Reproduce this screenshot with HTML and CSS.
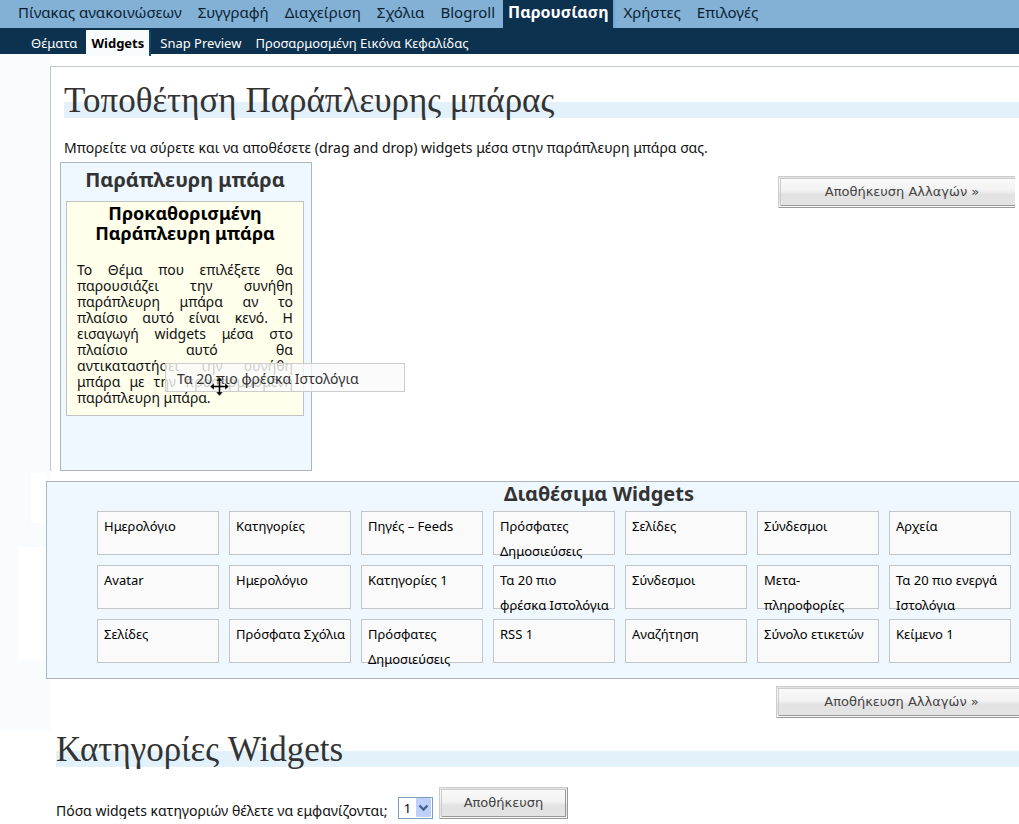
FILE: index.html
```html
<!DOCTYPE html>
<html lang="el">
<head>
<meta charset="utf-8">
<title>Widgets</title>
<link rel="stylesheet" href="styles.css">
</head>
<body>
<nav class="main-nav">
  <a href="#">Πίνακας ανακοινώσεων</a>
  <a href="#">Συγγραφή</a>
  <a href="#">Διαχείριση</a>
  <a href="#">Σχόλια</a>
  <a href="#">Blogroll</a>
  <a href="#" class="current">Παρουσίαση</a>
  <a href="#">Χρήστες</a>
  <a href="#">Επιλογές</a>
</nav>
<nav class="sub-nav">
  <a href="#">Θέματα</a>
  <a href="#" class="current">Widgets</a>
  <a href="#">Snap Preview</a>
  <a href="#">Προσαρμοσμένη Εικόνα Κεφαλίδας</a>
</nav>
<div class="workspace">
  <main class="panel">
    <h1 class="title">Τοποθέτηση Παράπλευρης μπάρας</h1>
    <p class="intro">Μπορείτε να σύρετε και να αποθέσετε (drag and drop) widgets μέσα στην παράπλευρη μπάρα σας.</p>
    <div class="arrange">
      <section class="sidebar">
        <h2 class="box-title">Παράπλευρη μπάρα</h2>
        <div class="placeholder">
          <h3 class="placeholder-title">Προκαθορισμένη Παράπλευρη μπάρα</h3>
          <p class="placeholder-text"><span class="full-lines">Το Θέμα που επιλέξετε θα παρουσιάζει την συνήθη παράπλευρη μπάρα αν το πλαίσιο αυτό είναι κενό. Η εισαγωγή widgets μέσα στο πλαίσιο αυτό θα</span> αντικαταστήσει την συνήθη μπάρα με την προσαρμοσμένη παράπλευρη μπάρα.</p>
        </div>
        <div class="dragged">Τα 20 πιο φρέσκα Ιστολόγια
          <svg class="move" viewBox="0 0 19 19" width="19" height="19" aria-hidden="true"><path d="M9.500 0l3.500 4h-2.500v4.500h4.500v-2.500l4 3.500-4 3.500v-2.500h-4.500v4.500h2.500l-3.500 4-3.500-4h2.500v-4.500h-4.500v2.500l-4-3.500 4-3.500v2.500h4.500v-4.500h-2.500z" fill="#000" stroke="#fff" stroke-width=".4"/></svg>
        </div>
      </section>
      <button type="button" class="button save">Αποθήκευση Αλλαγών »</button>
    </div>
  </main>
  <section class="available">
    <h2 class="box-title">Διαθέσιμα Widgets</h2>
    <ul class="widgets">
      <li>Ημερολόγιο</li><li>Κατηγορίες</li><li>Πηγές – Feeds</li><li>Πρόσφατες Δημοσιεύσεις</li><li>Σελίδες</li><li>Σύνδεσμοι</li><li>Αρχεία</li>
      <li>Avatar</li><li>Ημερολόγιο</li><li>Κατηγορίες 1</li><li>Τα 20 πιο<br>φρέσκα Ιστολόγια</li><li>Σύνδεσμοι</li><li>Μετα-<br>πληροφορίες</li><li>Τα 20 πιο ενεργά Ιστολόγια</li>
      <li>Σελίδες</li><li>Πρόσφατα Σχόλια</li><li>Πρόσφατες Δημοσιεύσεις</li><li>RSS 1</li><li>Αναζήτηση</li><li>Σύνολο ετικετών</li><li>Κείμενο 1</li>
    </ul>
  </section>
  <div class="save-row">
    <button type="button" class="button save">Αποθήκευση Αλλαγών »</button>
  </div>
</div>
<section class="categories">
  <h1 class="title">Κατηγορίες Widgets</h1>
  <form class="count-form">
    <label for="count">Πόσα widgets κατηγοριών θέλετε να εμφανίζονται;</label>
    <span class="select">
      <select id="count"><option>1</option><option>2</option><option>3</option></select>
      <svg viewBox="0 0 15 19" width="15" height="19" aria-hidden="true"><rect width="15" height="19" rx="1" fill="#bdd0fa"/><path d="M3.500 7.500l4 4 4-4" fill="none" stroke="#43608f" stroke-width="2.400"/></svg>
    </span>
    <button type="button" class="button">Αποθήκευση</button>
  </form>
</section>
</body>
</html>
```
FILE: styles.css
```css
* { box-sizing: border-box; }
body {
  margin: 0;
  overflow-x: hidden;
  background: #fff;
  color: #111;
  font: 14px/16px "Noto Sans", sans-serif;
}
h1, h2, h3, p, ul { margin: 0; padding: 0; font-weight: normal; }
a { text-decoration: none; white-space: nowrap; }
.main-nav {
  display: flex;
  height: 28px;
  padding-left: 10px;
  background: #83b0d5;
  font-size: 15px;
  line-height: 24px;
}
.main-nav a { padding: 0 8px; color: #0a1f33; }
.main-nav .current {
  padding: 0 5px;
  background: #0d324f;
  border-right: 2px solid #6da6d1;
  color: #fff;
  font-size: 16px;
  font-weight: bold;
}
.sub-nav {
  display: flex;
  height: 26px;
  padding: 2px 0 0 24px;
  background: #0d324f;
  font-size: 13px;
  line-height: 27px;
}
.sub-nav a { padding: 0 7px; color: #fff; }
.sub-nav .current {
  height: 26px;
  margin: 0 2px;
  padding: 0 5px;
  background: #f9fcfe;
  border-right: 2px solid #0d4a73;
  color: #000;
  font-weight: bold;
}
.workspace {
  padding-top: 12px;
  background:
    linear-gradient(#fff, #fff) 31px 419px / 15px 50px no-repeat,
    linear-gradient(#fff, #fff) 18px 493px / 28px 113px no-repeat,
    linear-gradient(90deg, #f8fcff 50px, #fff 50px);
}
.panel {
  margin-left: 50px;
  padding: 14px 0 0 9px;
  border: solid #c1c7cf;
  border-width: 1px 0 0 1px;
  background: #fff;
}
.title {
  height: 37px;
  border-bottom: 16px solid #e3f1fb;
  color: #333;
  font: 35px/40px "Liberation Serif", serif;
}
.panel .title, .intro { margin-left: 4px; }
.intro { margin-top: 22px; }
.arrange { display: flex; justify-content: space-between; margin-top: 6px; }
.sidebar {
  position: relative;
  width: 252px;
  height: 309px;
  padding: 6px 7px 0 5px;
  border: 1px solid #adb6bf;
  background: #eff7ff;
}
.box-title {
  color: #333;
  font-size: 20px;
  line-height: 22px;
  font-weight: bold;
  text-align: center;
}
.placeholder {
  margin-top: 10px;
  padding: 1px 10px 9px;
  border: 1px solid #bfc3c3;
  background: #ffffec;
}
.placeholder-title {
  color: #000;
  font-size: 18px;
  line-height: 20px;
  font-weight: bold;
  text-align: center;
}
.placeholder-text { margin-top: 19px; text-align: justify; }
.full-lines { display: block; text-align-last: justify; }
.dragged {
  position: absolute;
  left: 104px;
  top: 200px;
  width: 240px;
  height: 29px;
  padding: 7px 11px;
  border: 1px solid #ccc;
  background: rgba(250, 250, 250, .8);
  color: #333;
  white-space: nowrap;
}
.move { position: absolute; left: 44px; top: 13px; }
.button {
  height: 32px;
  padding: 0 22px 2px;
  border: 3px double;
  border-color: #ccc #999 #999 #ccc;
  background: linear-gradient(#fafafa, #f2f2f2 45%, #e2e2e2 60%, #e4e4e4);
  color: #444;
  font: 13px "DejaVu Sans", sans-serif;
}
.save { width: 237px; border-right: 0; padding: 0 8px 2px 16px; }
.arrange .save { margin: 14px 4px 0 0; }
.available {
  margin: 10px 0 0 46px;
  padding: 1px 8px 15px 50px;
  border: solid #adb6bf;
  border-width: 1px 0 1px 1px;
  background: #eff7ff;
}
.available .box-title { padding-left: 90px; }
.widgets {
  display: grid;
  grid-template-columns: repeat(7, 1fr);
  gap: 10px;
  margin-top: 6px;
  list-style: none;
  font-size: 13px;
  line-height: 25px;
}
.widgets li {
  height: 44px;
  padding: 2px 0 0 6px;
  border: 1px solid #c4c7ca;
  background: #fafafa;
  color: #000;
}
.save-row { display: flex; justify-content: flex-end; padding: 7px 0 12px; }
.save-row .save { width: 243px; padding: 0 0 2px 5px; }
.categories { margin-left: 56px; }
.count-form {
  display: flex;
  align-items: flex-end;
  gap: 6px;
  margin-top: 20px;
}
.count-form label { padding-right: 4px; }
.select { position: relative; display: flex; }
select {
  appearance: none;
  width: 35px;
  height: 22px;
  padding: 0 5px;
  border: 1px solid #7f9db9;
  border-radius: 0;
  background: #fff;
  color: #000;
  font: 13px "Noto Sans", sans-serif;
}
.select svg { position: absolute; right: 2px; top: 1px; pointer-events: none; }
```
